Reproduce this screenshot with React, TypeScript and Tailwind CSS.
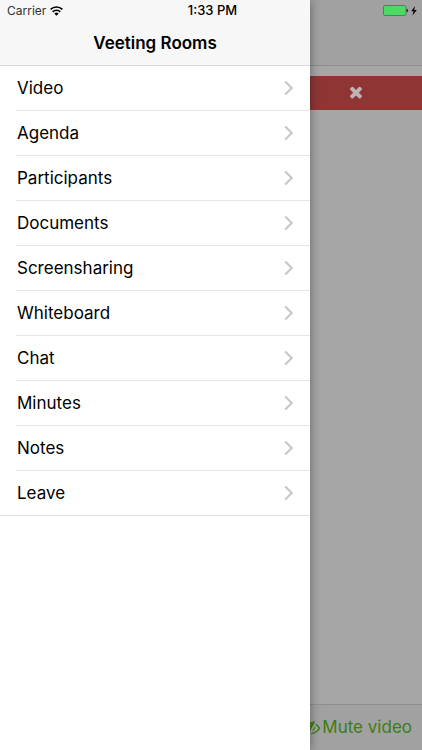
const menuItems = [
  'Video',
  'Agenda',
  'Participants',
  'Documents',
  'Screensharing',
  'Whiteboard',
  'Chat',
  'Minutes',
  'Notes',
  'Leave',
];

function WifiIcon() {
  return (
    <svg width="13" height="10" viewBox="0 0 13 10" fill="none" stroke="#000" strokeWidth="1.7" aria-hidden="true">
      <path d="M0.6 3.4a8.4 8.4 0 0 1 11.8 0" />
      <path d="M2.7 5.8a5.4 5.4 0 0 1 7.6 0" />
      <path d="M6.5 9.8L4.4 7.7a2.9 2.9 0 0 1 4.200 0z" fill="#000" stroke="none" />
    </svg>
  );
}

function BatteryIcon() {
  return (
    <svg width="35" height="12" viewBox="0 0 35 12" aria-hidden="true">
      <rect x="0.5" y="0.5" width="22.500" height="10" rx="1.500" fill="#4cd964" stroke="#5c7a61" />
      <path d="M23.600 3.700v3.600q1.500-.3 1.500-1.800t-1.500-1.800z" fill="#222" />
      <path d="M32.200 1L28.100 6.200h2.500l-1.100 4.300 4.300-5.600h-2.700z" fill="#000" />
    </svg>
  );
}

function ChevronIcon() {
  return (
    <svg width="10" height="16" viewBox="0 0 10 16" fill="none" stroke="#c7c7cc" strokeWidth="2.200" aria-hidden="true">
      <path d="M1.200 1.500L7.700 8l-6.500 6.500" />
    </svg>
  );
}

function CloseIcon() {
  return (
    <svg width="18" height="18" viewBox="0 0 1792 1792" fill="#bfb4b4" aria-hidden="true">
      <path d="M1490 1322q0 40-28 68l-136 136q-28 28-68 28t-68-28l-294-294-294 294q-28 28-68 28t-68-28l-136-136q-28-28-28-68t28-68l294-294-294-294q-28-28-28-68t28-68l136-136q28-28 68-28t68 28l294 294 294-294q28-28 68-28t68 28l136 136q28 28 28 68t-28 68l-294 294 294 294q28 28 28 68z" />
    </svg>
  );
}

function EyeSlashIcon() {
  return (
    <svg className="shrink-0" width="19" height="19" viewBox="0 0 1792 1792" fill="currentColor" aria-hidden="true">
      <path d="M555 1335l78-141q-87-63-136-159t-49-203q0-121 61-225-229 117-381 353 167 258 427 375zm389-759q0-20-14-34t-34-14q-125 0-214.5 89.5t-89.5 214.5q0 20 14 34t34 14 34-14 14-34q0-86 61-147t147-61q20 0 34-14t14-34zm363-191q0 7-1 9-106 189-316 567t-315 566l-49 89q-10 16-28 16-12 0-134-70-16-10-16-28 0-12 44-87-143-65-263.5-173t-208.5-245q-20-31-20-69t20-69q153-235 380-371t496-136q89 0 180 17l54-97q10-16 28-16 5 0 18 6t31 15.5 33 18.5 31.5 18.5 19.5 11.5q16 10 16 27zm37 447q0 139-79 253.5t-209 164.5l280-502q8 45 8 84zm448 128q0 35-20 69-39 64-109 145-150 172-347.5 267t-419.5 95l74-132q212-18 392.5-137t301.5-307q-115-179-282-294l63-112q95 64 182.5 153t144.5 186q20 34 20 69z" />
    </svg>
  );
}

function StatusBar() {
  return (
    <div className="absolute inset-x-0 top-0 z-20 grid h-[22px] grid-cols-3 items-center pl-[7px] pr-1 text-black">
      <div className="flex items-center gap-1 text-[12px] text-[#333]">
        <span>Carrier</span>
        <WifiIcon />
      </div>
      <span className="text-center text-[13px] font-medium">1:33 PM</span>
      <div className="flex justify-end">
        <BatteryIcon />
      </div>
    </div>
  );
}

function SideMenu() {
  return (
    <aside className="z-10 flex w-[310px] shrink-0 flex-col bg-white shadow-[0_0_10px_rgba(0,0,0,0.4)]">
      <header className="flex h-[66px] items-end justify-center border-b border-[#d9d9db] bg-[#f7f7f7] pb-3">
        <h1 className="text-[17px] leading-[20px] font-semibold text-black">Veeting Rooms</h1>
      </header>
      <nav className="border-b border-[#e0e0e2]">
        <ul className="divide-y divide-[#e6e6e8] pl-4">
          {menuItems.map((item) => (
            <li key={item}>
              <a href="#" className="flex h-11 items-center justify-between pr-4 pl-px text-[17px] leading-[22px] text-black">
                <span>{item}</span>
                <ChevronIcon />
              </a>
            </li>
          ))}
        </ul>
      </nav>
    </aside>
  );
}

function VideoPage() {
  return (
    <main className="flex min-w-0 flex-1 flex-col overflow-hidden bg-[#a6a6a6]">
      <div className="h-[66px] border-b border-[#8f8f8f] bg-[#a1a1a1]" />
      <div className="mt-[10px] flex h-[34px] items-center bg-[#8f3635] pb-[2px] pl-[37px]">
        <button type="button" aria-label="Close">
          <CloseIcon />
        </button>
      </div>
      <div className="flex-1" />
      <footer className="flex h-[46px] items-center justify-end border-t border-[#8f8f8f] bg-[#a1a1a1] pr-[10px]">
        <button type="button" className="flex items-center gap-0.5 text-[17px] whitespace-nowrap text-[#3d7d12]">
          <EyeSlashIcon />
          Mute video
        </button>
      </footer>
    </main>
  );
}

export default function App() {
  return (
    <div className="relative flex min-h-screen overflow-hidden font-['Inter','Liberation_Sans',sans-serif]">
      <StatusBar />
      <SideMenu />
      <VideoPage />
    </div>
  );
}
